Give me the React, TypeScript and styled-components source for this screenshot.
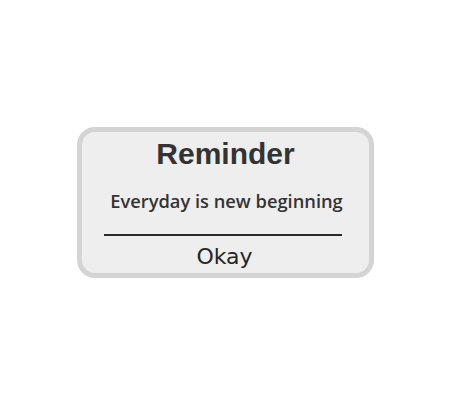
import React from "react";
import styled, { createGlobalStyle } from "styled-components";

const GlobalStyle = createGlobalStyle`
  html, body {
    margin: 0;
    padding: 0;
    background: #ffffff;
  }
`;

const Page = styled.div`
  width: 450px;
  height: 405px;
  display: flex;
  align-items: center;
  justify-content: center;
`;

const Card = styled.div`
  box-sizing: border-box;
  width: 297px;
  height: 151px;
  margin-left: 1px;
  background: #efeeef;
  border: 5px solid #d4d4d4;
  border-radius: 18px;
  display: flex;
  flex-direction: column;
  align-items: center;
  padding-top: 7px;
`;

const Title = styled.h1`
  margin: 0;
  font-family: "Liberation Sans", Arial, sans-serif;
  font-weight: 700;
  font-size: 30px;
  line-height: 1;
  color: #333333;
`;

const Message = styled.p`
  margin: 23px 0 0 2px;
  font-family: "Open Sans", sans-serif;
  font-weight: 600;
  font-size: 18.3px;
  line-height: 1;
  color: #333333;
`;

const Divider = styled.div`
  width: 238px;
  height: 1.5px;
  margin: 24px 0 0 -5px;
  background: #2a2a2a;
`;

const OkayButton = styled.button`
  margin: 10px 0 0 -2px;
  padding: 0;
  border: none;
  background: transparent;
  font-family: "DejaVu Sans", sans-serif;
  font-size: 22px;
  line-height: 1;
  color: #262626;
  cursor: pointer;
`;

const App = () => {
  return (
    <>
      <GlobalStyle />
      <Page>
        <Card>
          <Title>Reminder</Title>
          <Message>Everyday is new beginning</Message>
          <Divider />
          <OkayButton>Okay</OkayButton>
        </Card>
      </Page>
    </>
  );
};

export default App;
